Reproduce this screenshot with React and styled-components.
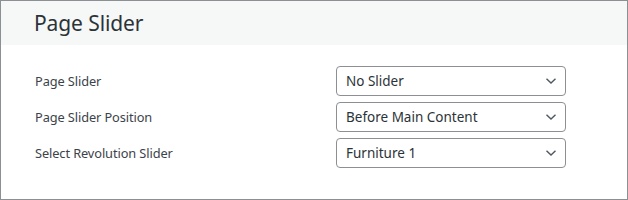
import styled, { createGlobalStyle } from 'styled-components';

const GlobalStyle = createGlobalStyle`
  html, body {
    margin: 0;
    padding: 0;
    background: #ffffff;
  }
  body {
    font-family: "Noto Sans", "Open Sans", sans-serif;
  }
`;

const Panel = styled.div`
  width: 628px;
  height: 200px;
  box-sizing: border-box;
  border: 1px solid #8c8f94;
  background: #ffffff;
`;

const PanelHeader = styled.div`
  height: 44px;
  background: #f6f7f7;
  display: flex;
  align-items: center;
  padding-left: 33px;
`;

const Title = styled.h2`
  margin: 0;
  font-size: 21px;
  font-weight: 400;
  color: #2c3338;
  letter-spacing: -0.1px;
`;

const Fields = styled.div`
  display: flex;
  flex-direction: column;
  gap: 6px;
  padding: 21px 0 0 34px;
`;

const Row = styled.div`
  display: grid;
  grid-template-columns: 301px 230px;
  align-items: center;
  height: 30px;
`;

const Label = styled.label`
  font-size: 12.8px;
  font-weight: 400;
  color: #3c434a;
  letter-spacing: -0.1px;
`;

const SelectBox = styled.div`
  box-sizing: border-box;
  height: 30px;
  border: 1px solid #8c8f94;
  border-radius: 4px;
  display: flex;
  align-items: center;
  justify-content: space-between;
  padding: 0 8px 0 9px;
  font-size: 13.5px;
  color: #2c3338;
`;

const Chevron = () => (
  <svg width="12" height="8" viewBox="0 0 12 8">
    <path d="M1.5 1.8 L6 6 L10.5 1.8" fill="none" stroke="#50575e" strokeWidth="1.4" />
  </svg>
);

const fields = [
  { label: 'Page Slider', value: 'No Slider' },
  { label: 'Page Slider Position', value: 'Before Main Content' },
  { label: 'Select Revolution Slider', value: 'Furniture 1' },
];

const App = () => (
  <>
    <GlobalStyle />
    <Panel>
      <PanelHeader>
        <Title>Page Slider</Title>
      </PanelHeader>
      <Fields>
        {fields.map((field) => (
          <Row key={field.label}>
            <Label>{field.label}</Label>
            <SelectBox>
              <span>{field.value}</span>
              <Chevron />
            </SelectBox>
          </Row>
        ))}
      </Fields>
    </Panel>
  </>
);

export default App;
